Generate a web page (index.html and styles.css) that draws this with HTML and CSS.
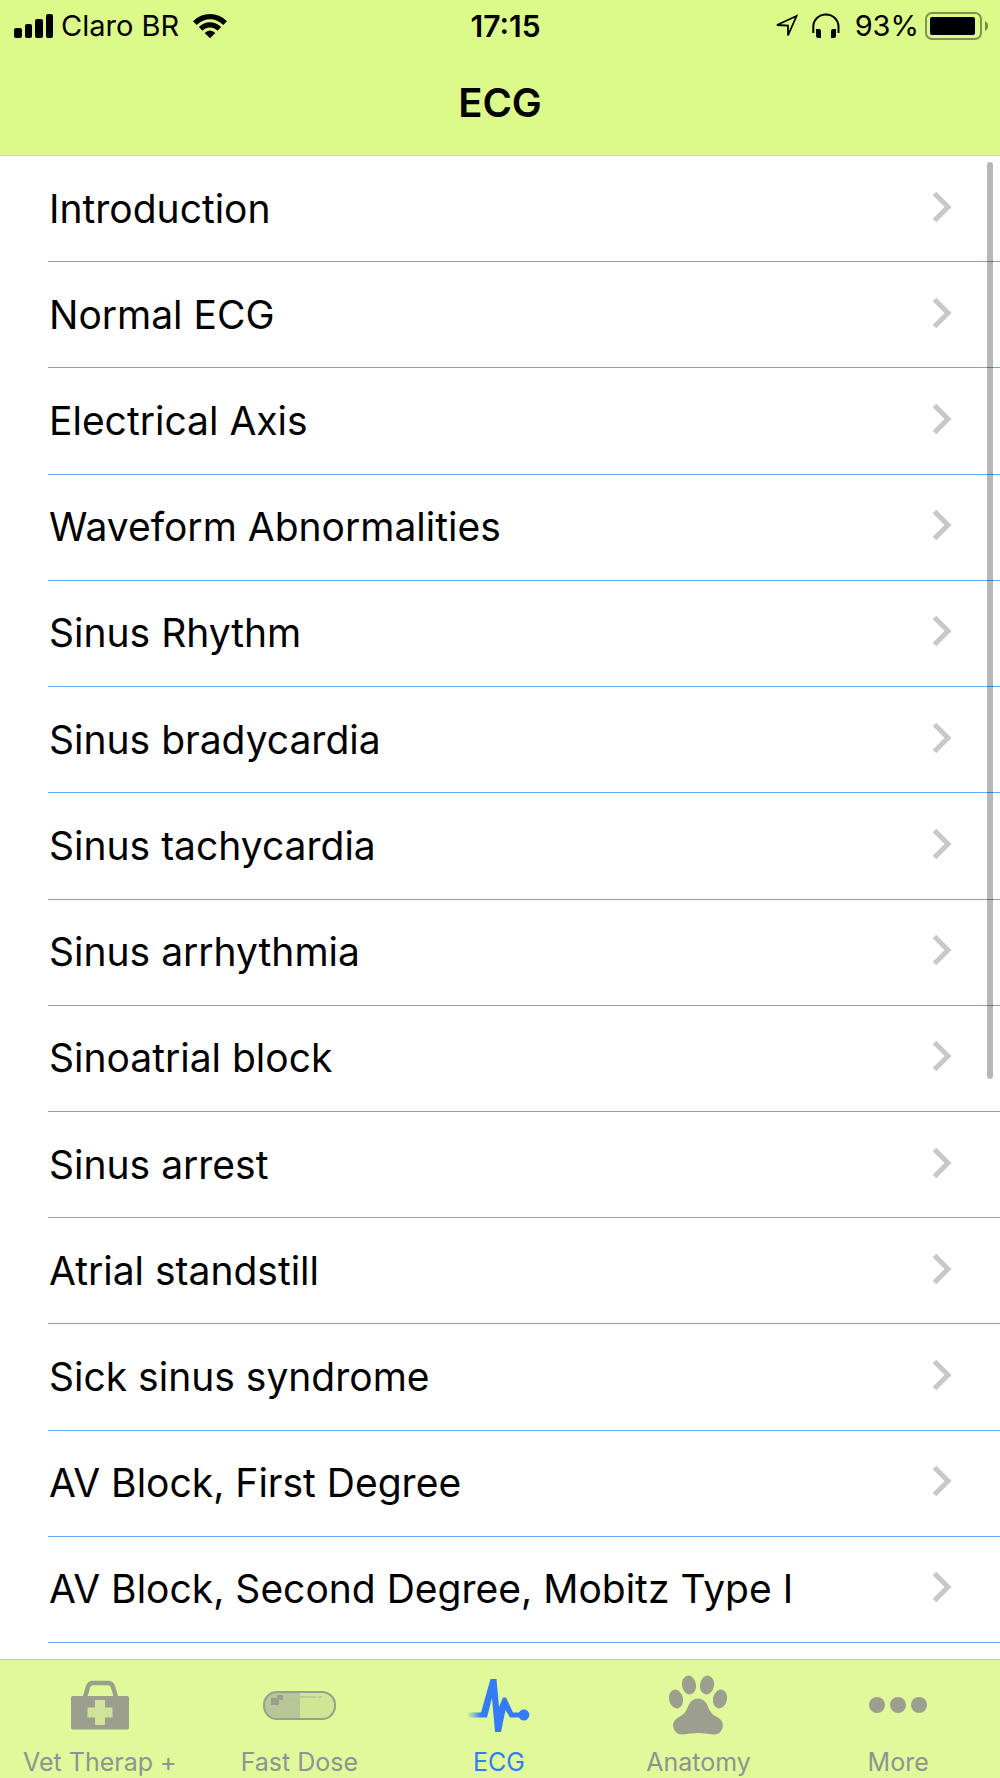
FILE: index.html
```html
<!DOCTYPE html>
<html lang="en">
<head>
<meta charset="utf-8">
<meta name="viewport" content="width=device-width, initial-scale=1">
<title>ECG</title>
<link rel="stylesheet" href="styles.css">
</head>
<body>
<div class="app">
  <header class="header">
    <div class="status">
      <div class="status-side">
        <svg width="40" height="26" viewBox="0 0 40 26" aria-hidden="true">
          <rect x="0" y="15" width="8" height="10" rx="2"/><rect x="11" y="11" width="7" height="14" rx="2"/><rect x="21" y="6" width="8" height="19" rx="2"/><rect x="32" y="1" width="7" height="24" rx="2"/>
        </svg>
        <span class="carrier">Claro BR</span>
        <svg width="34" height="26" viewBox="0 0 34 26" aria-hidden="true">
          <path d="M0 8.2Q7.4 1 17 1T34 8.2L30.3 12Q24.4 6.3 17 6.3T3.7 12Z"/>
          <path d="M5.8 14Q10.6 9.2 17 9.2T28.2 14L24.5 17.7Q21.2 14.4 17 14.4T9.500 17.7Z"/>
          <path d="M11.700 20Q14 17.500 17 17.500T22.300 20L17 25.300Z"/>
        </svg>
      </div>
      <time class="clock" datetime="17:15">17:15</time>
      <div class="status-side status-right">
        <svg width="24" height="26" viewBox="0 0 24 26" aria-hidden="true">
          <path d="M2 12L21.500 3L13 22.500V12.500Z" fill="none" stroke="#000" stroke-width="1.800"/>
        </svg>
        <svg class="headphones" width="28" height="26" viewBox="0 0 28 26" aria-hidden="true">
          <path d="M1.300 20V13.500A12.500 12 0 0 1 26.500 13.500V20" fill="none" stroke="#000" stroke-width="2"/>
          <path d="M4 16h3q2 0 2 2v7H6q-2 0-2-2zM24 16h-3q-2 0-2 2v7h3q2 0 2-2z"/>
        </svg>
        <span>93%</span>
        <svg class="battery" width="64" height="28" viewBox="0 0 64 28" aria-hidden="true">
          <rect x="1" y="1" width="55" height="26" rx="6" fill="none" stroke="#000" stroke-opacity=".42" stroke-width="2"/>
          <rect x="5" y="5" width="45" height="18" rx="2"/>
          <path d="M60 9q3 1.500 3 5t-3 5z" fill-opacity=".45"/>
        </svg>
      </div>
    </div>
    <h1 class="title">ECG</h1>
  </header>

  <main class="content">
    <ul class="list">
      <li><a class="row" href="#introduction">Introduction<svg class="chevron" viewBox="0 0 20 32" aria-hidden="true"><path d="M2.500 2.500L16 16L2.500 29.500"/></svg></a></li>
      <li><a class="row" href="#normal">Normal ECG<svg class="chevron" viewBox="0 0 20 32" aria-hidden="true"><path d="M2.500 2.500L16 16L2.500 29.500"/></svg></a></li>
      <li><a class="row" href="#axis">Electrical Axis<svg class="chevron" viewBox="0 0 20 32" aria-hidden="true"><path d="M2.500 2.500L16 16L2.500 29.500"/></svg></a></li>
      <li><a class="row" href="#waveform">Waveform Abnormalities<svg class="chevron" viewBox="0 0 20 32" aria-hidden="true"><path d="M2.500 2.500L16 16L2.500 29.500"/></svg></a></li>
      <li><a class="row" href="#rhythm">Sinus Rhythm<svg class="chevron" viewBox="0 0 20 32" aria-hidden="true"><path d="M2.500 2.500L16 16L2.500 29.500"/></svg></a></li>
      <li><a class="row" href="#bradycardia">Sinus bradycardia<svg class="chevron" viewBox="0 0 20 32" aria-hidden="true"><path d="M2.500 2.500L16 16L2.500 29.500"/></svg></a></li>
      <li><a class="row" href="#tachycardia">Sinus tachycardia<svg class="chevron" viewBox="0 0 20 32" aria-hidden="true"><path d="M2.500 2.500L16 16L2.500 29.500"/></svg></a></li>
      <li><a class="row" href="#arrhythmia">Sinus arrhythmia<svg class="chevron" viewBox="0 0 20 32" aria-hidden="true"><path d="M2.500 2.500L16 16L2.500 29.500"/></svg></a></li>
      <li><a class="row" href="#sinoatrial">Sinoatrial block<svg class="chevron" viewBox="0 0 20 32" aria-hidden="true"><path d="M2.500 2.500L16 16L2.500 29.500"/></svg></a></li>
      <li><a class="row" href="#arrest">Sinus arrest<svg class="chevron" viewBox="0 0 20 32" aria-hidden="true"><path d="M2.500 2.500L16 16L2.500 29.500"/></svg></a></li>
      <li><a class="row" href="#standstill">Atrial standstill<svg class="chevron" viewBox="0 0 20 32" aria-hidden="true"><path d="M2.500 2.500L16 16L2.500 29.500"/></svg></a></li>
      <li><a class="row" href="#sick-sinus">Sick sinus syndrome<svg class="chevron" viewBox="0 0 20 32" aria-hidden="true"><path d="M2.500 2.500L16 16L2.500 29.500"/></svg></a></li>
      <li><a class="row" href="#av-first">AV Block, First Degree<svg class="chevron" viewBox="0 0 20 32" aria-hidden="true"><path d="M2.500 2.500L16 16L2.500 29.500"/></svg></a></li>
      <li><a class="row" href="#av-second">AV Block, Second Degree, Mobitz Type I<svg class="chevron" viewBox="0 0 20 32" aria-hidden="true"><path d="M2.500 2.500L16 16L2.500 29.500"/></svg></a></li>
    </ul>
    <div class="scrollbar"></div>
  </main>

  <nav class="tabs" aria-label="Sections">
    <a class="tab" href="#therap">
      <svg class="tab-icon" viewBox="0 0 80 60" aria-hidden="true">
        <path d="M25 22L28 12Q29 8 33 8H48Q52 8 53 12L56 22" fill="none" stroke="currentColor" stroke-width="4.500"/>
        <path d="M13 21H67Q69 21 69 23V52Q69 54.500 67 54.500H13Q11 54.500 11 52V23Q11 21 13 21Z"/>
        <path d="M35 25H45V32.500H52.500V42.500H45V50H35V42.500H27.500V32.500H35Z" fill="#cfe39a"/>
      </svg>
      Vet Therap +
    </a>
    <a class="tab" href="#dose">
      <svg class="tab-icon" viewBox="0 0 80 60" aria-hidden="true">
        <path d="M41 17H18A13 13 0 0 0 18 43H41Z" fill="#b9c698"/>
        <path d="M41 17H63A13 13 0 0 1 63 43H41Z" fill="#d1e695"/>
        <rect x="5" y="17" width="71" height="27" rx="13" fill="none" stroke="currentColor" stroke-width="2"/>
        <path d="M12 23h6v-3h6v5h-4v5h-8z"/>
        <path d="M30 22H57M59 22h4" fill="none" stroke="#bccb94" stroke-width="2"/>
      </svg>
      Fast Dose
    </a>
    <a class="tab tab-active" href="#ecg" aria-current="page">
      <svg class="tab-icon trace" viewBox="0 0 80 60" aria-hidden="true">
        <defs><linearGradient id="trace" gradientUnits="userSpaceOnUse" x1="8" y1="0" x2="22" y2="0"><stop offset="0" stop-color="#347cf6" stop-opacity="0"/><stop offset="1" stop-color="#347cf6"/></linearGradient></defs>
        <path d="M8 37.500H22L31.500 4H37.500L40 32L44 22.500L47 22.500L54 37.500H60A5.500 5.500 0 1 1 60 42.500H51L46.500 35L42 57H36L33 23L28 42.500H8Z" fill="url(#trace)"/>
      </svg>
      ECG
    </a>
    <a class="tab" href="#anatomy">
      <svg class="tab-icon" viewBox="0 0 80 60" aria-hidden="true">
        <ellipse cx="17" cy="24" rx="7" ry="9.500" transform="rotate(-12 17 24)"/>
        <ellipse cx="30" cy="10" rx="7" ry="9.500" transform="rotate(-10 30 10)"/>
        <ellipse cx="48" cy="10" rx="7" ry="9.500" transform="rotate(10 48 10)"/>
        <ellipse cx="61" cy="24" rx="7" ry="9.500" transform="rotate(12 61 24)"/>
        <path d="M39 23.500Q45 23.500 48 29.500C51 36 52 39 58 42Q64 45.500 64 50.500Q63 60 54 59.500Q46 58 39 58T24 59.500Q15 60 14 50.500Q14 45.500 20 42C26 39 27 36 30 29.500Q33 23.500 39 23.500Z"/>
      </svg>
      Anatomy
    </a>
    <a class="tab" href="#more">
      <svg class="tab-icon" viewBox="0 0 80 60" aria-hidden="true">
        <circle cx="19" cy="30" r="8"/><circle cx="40" cy="30" r="8"/><circle cx="61" cy="30" r="8"/>
      </svg>
      More
    </a>
  </nav>
</div>
</body>
</html>
```
FILE: styles.css
```css
* {
  box-sizing: border-box;
}

body {
  margin: 0;
  background: #fff;
  color: #000;
  font-family: Inter, "Liberation Sans", sans-serif;
}

.app {
  display: flex;
  flex-direction: column;
  min-height: 100vh;
}

.header {
  background: #dcfa8a;
  border-bottom: 1px solid #ccd2ba;
}

.status {
  display: grid;
  grid-template-columns: 1fr auto 1fr;
  align-items: center;
  height: 51px;
  padding: 0 11px 0 14px;
  font-size: 29px;
  line-height: 34px;
}

.status-side {
  display: flex;
  align-items: center;
}

.status-right {
  justify-content: flex-end;
}

.carrier {
  margin: 0 14px 0 7px;
}

.clock {
  padding-left: 8px;
  font-size: 30px;
  font-weight: 600;
}

.headphones {
  margin: 0 15px 0 13px;
}

.battery {
  margin-left: 6px;
}

.title {
  margin: 0;
  padding: 28px 0;
  font-size: 40px;
  font-weight: 600;
  line-height: 48px;
  text-align: center;
}

.content {
  position: relative;
  display: flex;
  flex: 1;
  padding-bottom: 16px;
}

.list {
  display: grid;
  flex: 1;
  grid-auto-rows: 1fr;
  margin: 0;
  padding: 0 0 0 48px;
  list-style: none;
}

.row {
  display: flex;
  align-items: center;
  justify-content: space-between;
  height: 100%;
  padding: 0 48px 0 1px;
  border-bottom: 1px solid #62aaf8;
  color: inherit;
  font-size: 39px;
  line-height: 48px;
  text-decoration: none;
}

.chevron {
  flex: none;
  width: 20px;
  height: 32px;
  margin-bottom: 4px;
  fill: none;
  stroke: #c7c7cc;
  stroke-width: 5;
}

.scrollbar {
  position: absolute;
  top: 6px;
  right: 7px;
  width: 6px;
  height: 61%;
  border-radius: 3px;
  background: rgba(0, 0, 0, 0.28);
}

.tabs {
  display: grid;
  grid-template-columns: repeat(5, 1fr);
  padding: 15px 2px 1px 0;
  border-top: 1px solid #c3cdac;
  background: #e0f99a;
}

.tab {
  display: flex;
  flex-direction: column;
  align-items: center;
  gap: 12px;
  color: #929292;
  font-size: 25px;
  line-height: 30px;
  text-decoration: none;
}

.tab-icon {
  width: 80px;
  height: 60px;
  color: #9c9f8d;
  fill: currentColor;
}

.tab-active {
  color: #347cf6;
}
```
